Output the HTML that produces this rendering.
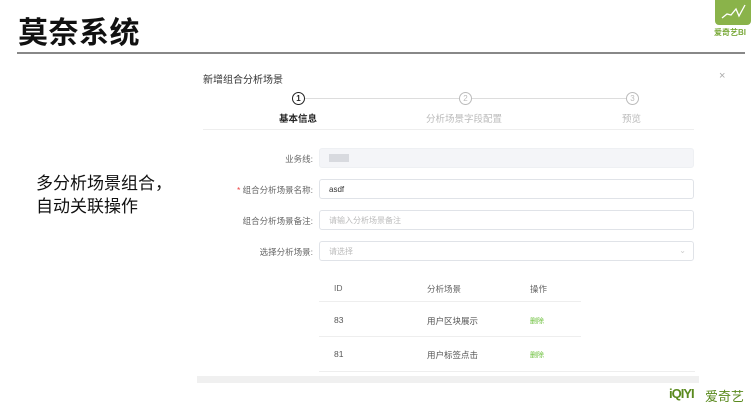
<!DOCTYPE html>
<html><head><meta charset="utf-8"><style>
*{margin:0;padding:0;box-sizing:border-box}
body{width:754px;height:403px;background:#fff;position:relative;overflow:hidden;font-family:"Liberation Sans","Noto Sans CJK SC",sans-serif;color:#333}
.a{position:absolute;white-space:nowrap}
.inp{position:absolute;left:319px;width:375px;height:20px;border:1px solid #e0e3e8;border-radius:3px;font-size:8px;color:#bbb;padding:5px 9px;line-height:9px}
.lbl{position:absolute;right:441px;font-size:8.5px;color:#666;text-align:right}
.c{position:absolute;width:13px;height:13px;border-radius:50%;border:1.3px solid #bbb;font-size:8px;color:#bbb;text-align:center;line-height:11px}
</style></head><body>
<div class="a" style="left:18px;top:8px;font-size:30px;font-weight:bold;color:#111;letter-spacing:0.5px">莫奈系统</div>
<div class="a" style="left:17px;top:52px;width:728px;height:2px;background:#888"></div>
<div class="a" style="left:715px;top:0;width:36px;height:25px;background:#8ab34a;border-radius:0 0 4px 4px"></div>
<svg class="a" style="left:718px;top:1px" width="30" height="22"><polyline points="4,17 9,13 13,14 18,8 21,15 27,4" fill="none" stroke="#fff" stroke-width="1.3"/></svg>
<div class="a" style="left:714px;top:27px;font-size:8px;color:#7aa93a;font-weight:bold">爱奇艺BI</div>
<div class="a" style="left:36px;top:172px;font-size:17px;line-height:23px;color:#111">多分析场景组合，<br>自动关联操作</div>

<div class="a" style="left:203px;top:71px;font-size:10px;color:#333">新增组合分析场景</div>
<div class="a" style="left:719px;top:70px;font-size:11px;color:#aaa">×</div>
<div class="a" style="left:305px;top:98px;width:155px;height:1px;background:#ddd"></div>
<div class="a" style="left:472px;top:98px;width:155px;height:1px;background:#ddd"></div>
<div class="c" style="left:292px;top:92px;border-color:#222;color:#222;font-weight:bold">1</div>
<div class="c" style="left:459px;top:92px">2</div>
<div class="c" style="left:626px;top:92px">3</div>
<div class="a" style="left:279px;top:111px;font-size:9.5px;font-weight:bold;color:#222">基本信息</div>
<div class="a" style="left:426px;top:111px;font-size:9.5px;color:#bbb">分析场景字段配置</div>
<div class="a" style="left:622px;top:111px;font-size:9.5px;color:#bbb">预览</div>
<div class="a" style="left:203px;top:129px;width:491px;height:1px;background:#eee"></div>

<div class="lbl" style="top:153px">业务线:</div>
<div class="inp" style="top:148px;background:#f4f5f8;border-color:#eef0f3"><span style="display:inline-block;width:20px;height:8px;background:#d8dadf"></span></div>
<div class="lbl" style="top:184px"><span style="color:#e44">*</span> 组合分析场景名称:</div>
<div class="inp" style="top:179px;color:#333">asdf</div>
<div class="lbl" style="top:215px">组合分析场景备注:</div>
<div class="inp" style="top:210px">请输入分析场景备注</div>
<div class="lbl" style="top:246px">选择分析场景:</div>
<div class="inp" style="top:241px">请选择<span style="position:absolute;right:7px;top:4px;color:#ccc">⌄</span></div>

<div class="a" style="left:334px;top:283px;font-size:8.5px;color:#666">ID</div>
<div class="a" style="left:427px;top:283px;font-size:8.5px;color:#666">分析场景</div>
<div class="a" style="left:530px;top:283px;font-size:8.5px;color:#666">操作</div>
<div class="a" style="left:319px;top:301px;width:262px;height:1px;background:#eee"></div>
<div class="a" style="left:334px;top:315px;font-size:8.5px;color:#555">83</div>
<div class="a" style="left:427px;top:315px;font-size:8.5px;color:#555">用户区块展示</div>
<div class="a" style="left:530px;top:316px;font-size:7px;color:#6bbf3a">删除</div>
<div class="a" style="left:319px;top:336px;width:262px;height:1px;background:#eee"></div>
<div class="a" style="left:334px;top:349px;font-size:8.5px;color:#555">81</div>
<div class="a" style="left:427px;top:349px;font-size:8.5px;color:#555">用户标签点击</div>
<div class="a" style="left:530px;top:350px;font-size:7px;color:#6bbf3a">删除</div>
<div class="a" style="left:319px;top:371px;width:376px;height:1px;background:#eee"></div>
<div class="a" style="left:197px;top:376px;width:502px;height:7px;background:#f0f0f0"></div>

<div class="a" style="left:669px;top:386px;font-size:13px;font-weight:bold;color:#5a8a1e;letter-spacing:-1px">iQIYI</div>
<div class="a" style="left:705px;top:386px;font-size:13px;color:#5a8a1e">爱奇艺</div>
</body></html>
